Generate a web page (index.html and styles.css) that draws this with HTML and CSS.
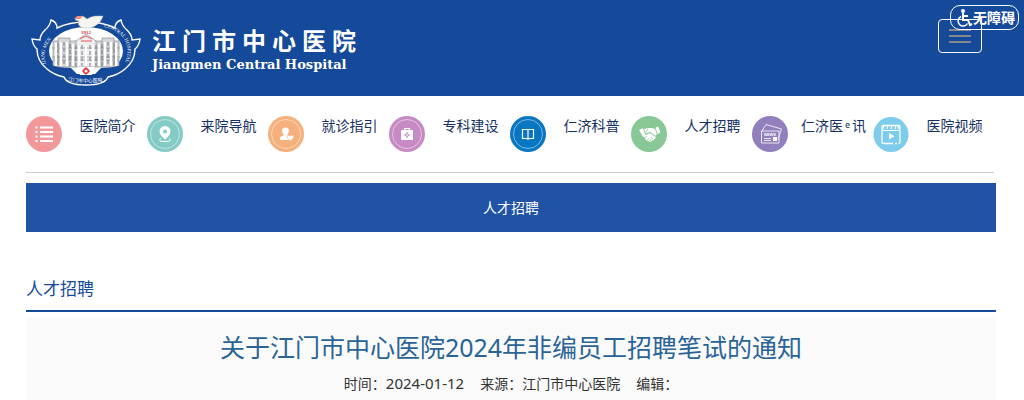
FILE: index.html
```
<!DOCTYPE html>
<html lang="zh-CN">
<head>
  <meta charset="utf-8">
  <meta name="viewport" content="width=device-width, initial-scale=1">
  <title>人才招聘 - 江门市中心医院</title>
  <link rel="stylesheet" href="styles.css">
</head>
<body>
  <header class="header">
    <a class="brand" href="#">
      <svg class="brand-logo" viewBox="0 0 110 74" role="img" aria-label="江门市中心医院">
        <defs>
          <path id="arc-left" d="M15 50 C10 35 18 22 36 16"/>
          <path id="arc-right" d="M73 13 C96 18 103 36 90 57"/>
          <path id="arc-bottom" d="M37 67 Q55 70 76 67"/>
        </defs>
        <path d="M20 6 Q26 8 26 14 Q38 8 55 8 Q72 8 84 14 Q84 8 90 6 Q91 12 96 16 Q101 21 101 26 L109 25 Q108 32 104 35 Q104 47 94 55 Q87 61 77 63 Q74 71 55 71 Q36 71 33 63 Q23 61 16 55 Q6 47 6 35 Q2 32 1 25 L9 26 Q9 21 14 16 Q19 12 20 6Z" fill="#15499a" stroke="#fff" stroke-width="1.400"/>
        <ellipse cx="55" cy="37" rx="37" ry="24" fill="#fff"/>
        <g fill="#d5d7da" stroke="#8b9097" stroke-width=".7">
          <path d="M22 27h66v26H22z"/>
          <path d="M27 24h12v29H27zM71 24h12v29H71z"/>
          <path d="M45 27L55 20l10 7v26H45z" fill="#eee"/>
          <path d="M21 34h68M21 43h68M22 46h66"/>
        </g>
        <path d="M25 29v23M30 28v24M36 28v24M42 30v22M48 31v21M55 31v21M62 31v21M68 30v22M74 28v24M80 28v24M85 29v23" stroke="#fff" stroke-width="2"/>
        <path d="M27 29v23M33 28v24M39 30v22M45 31v21M51 31v21M59 31v21M65 31v21M71 30v22M77 28v24M83 29v23" stroke="#777c83" stroke-width="1" stroke-dasharray="4 2"/>
        <path d="M20 51 Q27 54 40 54 L46 60 H64 L70 54 Q83 54 90 51 L84 58 L70 62 H40 L26 58Z" fill="#15499a"/>
        <path d="M46 53h18l-3 8H49z" fill="#fff"/>
        <circle cx="55" cy="57" r="2.3" fill="none" stroke="#e23137" stroke-width="1.500"/>
        <path d="M55 53v2M55 59v2M51 57h2M57 57h2" stroke="#e23137"/>
        <path d="M44 6q3-4 8-4l4 3 4-2 4-1h8q-2 7-8 10-8 4-14 1-4-2-2-6z" fill="#f5f5f2" stroke="#b5b5b5" stroke-width=".5"/>
        <path d="M43 5l3-3 6 0-3 3z" fill="#ef8b82"/>
        <path d="M49 25l6-3 6 3M50 27h11" fill="none" stroke="#e23137" stroke-width=".8"/>
        <text class="logo-year" x="55" y="20" text-anchor="middle">1912</text>
        <text class="logo-ring"><textPath href="#arc-left">JIANG MEN</textPath></text>
        <text class="logo-ring"><textPath href="#arc-right">CENTRAL HOSPITAL</textPath></text>
        <text class="logo-cn"><textPath href="#arc-bottom">江门市中心医院</textPath></text>
      </svg>
      <span class="brand-name">
        <span class="brand-cn">江门市中心医院</span>
        <span class="brand-en">Jiangmen Central Hospital</span>
      </span>
    </a>
    <button class="menu-toggle" type="button" aria-label="菜单">
      <span class="menu-bar"></span>
      <span class="menu-bar"></span>
      <span class="menu-bar"></span>
    </button>
    <a class="accessible" href="#">
      <svg class="accessible-icon" viewBox="0 0 18 18" fill="none" stroke="#fff" stroke-width="2">
        <circle cx="8" cy="2" r="2" fill="#fff" stroke="none"/>
        <path d="M8 4v7h5l2 5 2-1M8 7h5"/>
        <path d="M6 7.500a5 5 0 1 0 6.500 7" stroke-width="1.500"/>
      </svg>
      <span>无障碍</span>
    </a>
  </header>

  <main class="container">
    <nav class="quick-nav">
      <a class="quick-item" href="#">
        <svg class="quick-icon" viewBox="0 0 36 36">
          <circle cx="18" cy="18" r="18" fill="#f2989b"/>
          <path d="M14 11.500h13M14 16h13M14 20.500h13M14 25h13" stroke="#fff" stroke-width="2.200"/>
          <path d="M9.500 11.500h2M9.500 16h2M9.500 20.500h2M9.500 25h2" stroke="#fff" stroke-width="2"/>
        </svg>
        <span class="quick-label">医院简介</span>
      </a>
      <a class="quick-item" href="#">
        <svg class="quick-icon" viewBox="0 0 36 36">
          <circle cx="18" cy="18" r="18" fill="#84cbc6"/>
          <circle cx="18" cy="18" r="14.500" fill="none" stroke="#d5efed" stroke-width=".7"/>
          <path d="M18 23.500c-3-3-5.500-5-5.500-8a5.500 5.500 0 0 1 11 0c0 3-2.500 5-5.500 8z" fill="#fff"/>
          <circle cx="18" cy="15.500" r="2" fill="#84cbc6"/>
          <path d="M14 22.500c-4 2 0 3 4 3s8-1 4-3" fill="none" stroke="#fff"/>
        </svg>
        <span class="quick-label">来院导航</span>
      </a>
      <a class="quick-item" href="#">
        <svg class="quick-icon" viewBox="0 0 36 36">
          <circle cx="18" cy="18" r="18" fill="#f5b07c"/>
          <circle cx="18" cy="18" r="14.500" fill="none" stroke="#fde6d4" stroke-width=".7"/>
          <path d="M14 14.500c0-4 7-4 7 0 0 2-1 3-1.500 4v1.500l2 1v3H12v-2c0-1.500 2-2 3.500-2.500V18c-1-1-1.500-2-1.500-3.500z" fill="#fff"/>
          <path d="M22.500 25l-3-3c-1.500-2 1.500-4 3-2 1.500-2 4.500 0 3 2z" fill="#fff" stroke="#f5b07c" stroke-width=".6"/>
        </svg>
        <span class="quick-label">就诊指引</span>
      </a>
      <a class="quick-item" href="#">
        <svg class="quick-icon" viewBox="0 0 36 36">
          <circle cx="18" cy="18" r="18" fill="#c68ac4"/>
          <circle cx="18" cy="18" r="14.500" fill="none" stroke="#f0dcef" stroke-width=".7"/>
          <path d="M15.500 14v-1.500h5V14" fill="none" stroke="#fff" stroke-width="1.200"/>
          <rect x="12" y="14" width="12" height="10" rx="1" fill="#fff"/>
          <path d="M18 16.500v5M15.500 19h5" stroke="#c68ac4" stroke-width="2.200"/>
          <path d="M18 17.500v3M16.500 19h3" stroke="#fff" stroke-width=".7"/>
        </svg>
        <span class="quick-label">专科建设</span>
      </a>
      <a class="quick-item" href="#">
        <svg class="quick-icon" viewBox="0 0 36 36">
          <circle cx="18" cy="18" r="18" fill="#0876c1"/>
          <circle cx="18" cy="18" r="14.500" fill="none" stroke="#b0d6ef" stroke-width=".7"/>
          <path d="M12.500 13.500H17l1 .8 1-.8h4.500v9H19l-1 .8-1-.8h-4.500zM18 14v9" fill="none" stroke="#fff" stroke-width="1.200"/>
        </svg>
        <span class="quick-label">仁济科普</span>
      </a>
      <a class="quick-item" href="#">
        <svg class="quick-icon" viewBox="0 0 36 36">
          <circle cx="18" cy="18" r="18" fill="#88c896"/>
          <path d="M8 14l4-2 3 7-3 2zM24 12l3-1.500 2.500 5.500-3 2.500z" fill="#fff"/>
          <path d="M13 13l5-1 3 0 3 1 2 5-2 2-6-4-3 2-1-1z" fill="#fff"/>
          <path d="M12 19l3 0 3-2 7 4-1 2-5 3-4-2z" fill="#fff"/>
          <path d="M12 12l3 7M24 12l3 7M17 13l-3 4 2 1 3-2 5 4M14 22l2-2M16 24l2-2M19 25l1-2M20 21l2 2" fill="none" stroke="#88c896" stroke-width=".7"/>
        </svg>
        <span class="quick-label">人才招聘</span>
      </a>
      <a class="quick-item" href="#">
        <svg class="quick-icon" viewBox="0 0 36 36">
          <circle cx="18" cy="18" r="18" fill="#9180bd"/>
          <g fill="none" stroke="#fff" stroke-width=".8">
            <path d="M10 15l4-6.500 15.500 4.500-3.500 10.500"/>
            <path d="M9.500 15h17.500v12H9.500z"/>
            <path d="M12 22.500h7M12 24.500h7"/>
          </g>
          <path d="M21 21h4v4h-4z" fill="#fff"/>
          <text class="news-text" x="18" y="19.500" text-anchor="middle">NEWS</text>
        </svg>
        <span class="quick-label">仁济医<sup class="quick-sup">e</sup>讯</span>
      </a>
      <a class="quick-item" href="#">
        <svg class="quick-icon" viewBox="0 0 36 36">
          <circle cx="18" cy="18.500" r="17.500" fill="#7dccec"/>
          <path d="M27 16v10q0 1.500-1.500 1.500M22 27.500h2M20 27.500H10.500Q9 27.500 9 26V11q0-1.500 1.500-1.500h15Q27 9.500 27 11v5" fill="none" stroke="#fff" stroke-width="1.300"/>
          <path d="M10 14.500h16M11 9l-1 4M15 9l-1 4M19 9l-1 4M23 9l-1 4M26 9l-1 4" stroke="#fff" stroke-width="1.100"/>
          <path d="M16 17v6.500l5.500-3.200z" fill="#fff"/>
        </svg>
        <span class="quick-label">医院视频</span>
      </a>
    </nav>

    <div class="banner">人才招聘</div>
    <h2 class="section-title">人才招聘</h2>

    <article class="article">
      <h1 class="article-title">关于江门市中心医院2024年非编员工招聘笔试的通知</h1>
      <div class="article-meta">
        <span>时间：<time class="article-date">2024-01-12</time></span>
        <span>来源：江门市中心医院</span>
        <span>编辑：</span>
      </div>
    </article>
  </main>
</body>
</html>
```
FILE: styles.css
```
* {
  box-sizing: border-box;
}

body {
  margin: 0;
  background: #fff;
  color: #333;
  font-family: "Noto Sans", "Noto Sans CJK SC", sans-serif;
  font-size: 14px;
  line-height: 20px;
}

a {
  text-decoration: none;
}

/* header */
.header {
  position: relative;
  display: flex;
  justify-content: space-between;
  align-items: flex-start;
  height: 96px;
  padding: 14px 42px 0 31px;
  background: #15499a;
}

.brand {
  display: flex;
  color: #fff;
}

.brand-logo {
  width: 110px;
  height: 74px;
}

.logo-year {
  fill: #e23137;
  font: bold 5px "Liberation Serif", serif;
}

.logo-ring {
  fill: #fff;
  font: 5px "Liberation Serif", serif;
}

.logo-cn {
  fill: #fff;
  font: 5px "Noto Sans CJK SC", sans-serif;
}

.brand-name {
  display: flex;
  flex-direction: column;
  padding: 12px 0 0 11px;
}

.brand-cn {
  font-size: 24px;
  font-weight: bold;
  line-height: 30px;
  letter-spacing: 6px;
}

.brand-en {
  font-family: "DejaVu Serif", serif;
  font-size: 13px;
  font-weight: bold;
  line-height: 18px;
}

.menu-toggle {
  display: flex;
  flex-direction: column;
  gap: 4px;
  width: 44px;
  margin-top: 5px;
  padding: 9px 10px;
  background: transparent;
  border: 1px solid #fff;
  border-radius: 4px;
}

.menu-bar {
  height: 2px;
  background: #888;
}

/* floats over the menu button */
.accessible {
  position: absolute;
  top: 5px;
  right: 5px;
  display: flex;
  align-items: center;
  height: 25px;
  padding: 0 3px 0 4px;
  border: 1px solid #fff;
  border-radius: 10px;
  color: #fff;
  font-weight: bold;
}

.accessible-icon {
  width: 18px;
  height: 18px;
}

/* quick links */
.container {
  padding: 0 28px 0 26px;
}

.quick-nav {
  display: grid;
  grid-template-columns: repeat(8, 1fr);
  margin-right: 2px;
  padding: 20px 0;
  border-bottom: 1px solid #ccc;
}

.quick-item {
  display: flex;
  color: #15315f;
}

.quick-icon {
  flex: none;
  width: 36px;
  height: 36px;
}

.quick-label {
  flex: 1;
  padding-left: 6px;
  text-align: center;
  white-space: nowrap;
}

.quick-sup {
  padding: 0 2px;
  font-size: 9px;
  line-height: 0;
  vertical-align: 3px;
}

.news-text {
  fill: #fff;
  font: bold 4px "Liberation Sans", sans-serif;
}

/* content */
.banner {
  margin-top: 10px;
  background: #2153a5;
  color: #fff;
  line-height: 49px;
  text-align: center;
}

.section-title {
  margin: 42px 0 5px;
  padding-bottom: 6px;
  border-bottom: 2px solid #15499a;
  color: #15499a;
  font-size: 17px;
  font-weight: normal;
  line-height: 30px;
}

.article {
  padding: 12px 0 20px;
  background: #fafafa;
  text-align: center;
}

.article-title {
  margin: 0 0 9px;
  color: #2a6496;
  font-size: 25px;
  font-weight: normal;
  line-height: 36px;
}

.article-meta {
  display: flex;
  justify-content: center;
  align-items: baseline;
  gap: 16px;
}

.article-date {
  font-size: 15px;
  line-height: 18px;
}
```
